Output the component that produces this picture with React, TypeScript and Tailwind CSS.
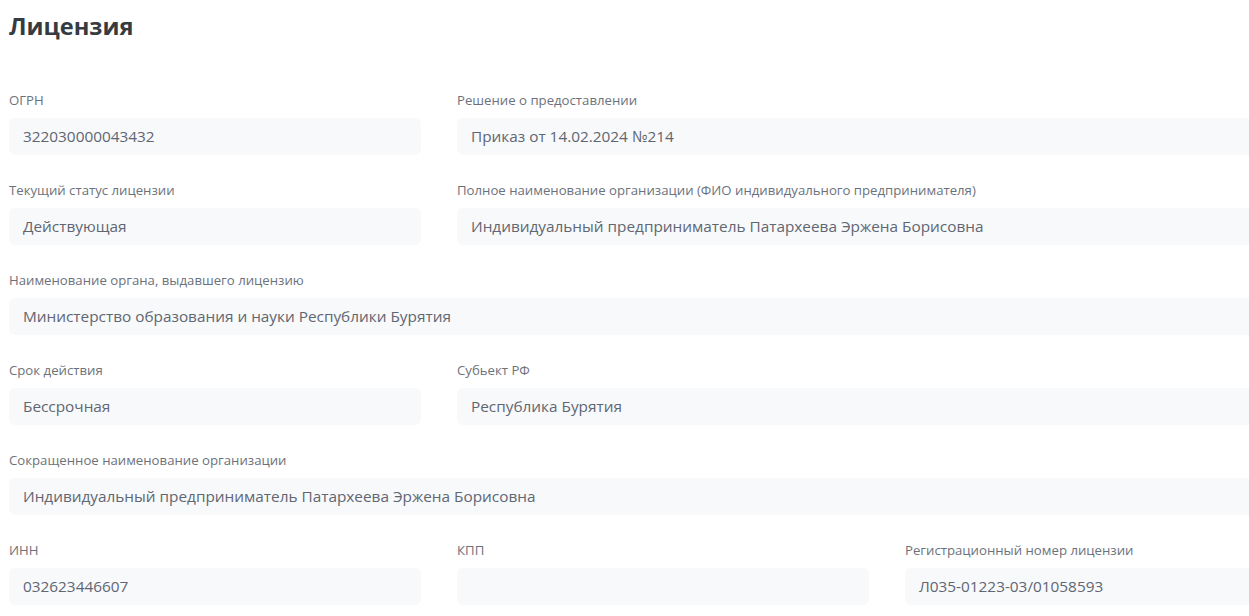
import type { ReactNode } from 'react';

type FieldProps = {
  label: string;
  value?: string;
  className?: string;
};

function Field({ label, value = '', className = '' }: FieldProps) {
  return (
    <div className={`flex flex-col ${className}`}>
      <label className="mb-[9px] text-[13.2px] leading-[18px] text-[#6c727c]">{label}</label>
      <div className="flex h-[37px] items-center rounded-[6px] bg-[#f8f9fb] px-[14px] pt-[1px] text-[15.35px] text-[#606672]">
        {value}
      </div>
    </div>
  );
}

function Row({ children }: { children: ReactNode }) {
  return <div className="grid grid-cols-[412px_412px_412px] gap-x-[36px]">{children}</div>;
}

export default function App() {
  return (
    <div className="min-h-screen w-full overflow-hidden bg-white font-['Open_Sans',sans-serif]">
      <div className="w-[1308px] pl-[9px] pt-[10px]">
        <h1 className="text-[23.6px] font-bold leading-[32px] text-[#363b42]">Лицензия</h1>

        <div className="mt-[49px] flex flex-col gap-y-[26px]">
          <Row>
            <Field label="ОГРН" value="322030000043432" />
            <Field label="Решение о предоставлении" value="Приказ от 14.02.2024 №214" className="col-span-2" />
          </Row>
          <Row>
            <Field label="Текущий статус лицензии" value="Действующая" />
            <Field
              label="Полное наименование организации (ФИО индивидуального предпринимателя)"
              value="Индивидуальный предприниматель Патархеева Эржена Борисовна"
              className="col-span-2"
            />
          </Row>
          <Row>
            <Field
              label="Наименование органа, выдавшего лицензию"
              value="Министерство образования и науки Республики Бурятия"
              className="col-span-3"
            />
          </Row>
          <Row>
            <Field label="Срок действия" value="Бессрочная" />
            <Field label="Субьект РФ" value="Республика Бурятия" className="col-span-2" />
          </Row>
          <Row>
            <Field
              label="Сокращенное наименование организации"
              value="Индивидуальный предприниматель Патархеева Эржена Борисовна"
              className="col-span-3"
            />
          </Row>
          <Row>
            <Field label="ИНН" value="032623446607" />
            <Field label="КПП" />
            <Field label="Регистрационный номер лицензии" value="Л035-01223-03/01058593" />
          </Row>
        </div>
      </div>
    </div>
  );
}
